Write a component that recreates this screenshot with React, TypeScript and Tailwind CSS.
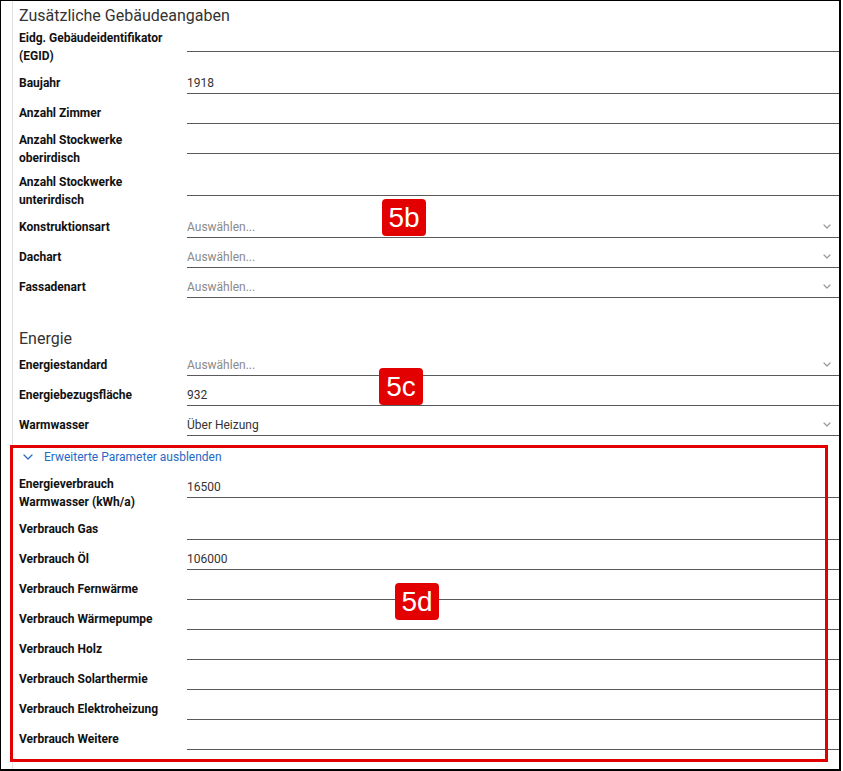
import React from "react";

type Field = {
  label: string;
  value?: string;
  select?: boolean;
  placeholder?: boolean;
};

const building: Field[] = [
  { label: "Eidg. Gebäudeidentifikator (EGID)" },
  { label: "Baujahr", value: "1918" },
  { label: "Anzahl Zimmer" },
  { label: "Anzahl Stockwerke oberirdisch" },
  { label: "Anzahl Stockwerke unterirdisch" },
  { label: "Konstruktionsart", value: "Auswählen...", select: true, placeholder: true },
  { label: "Dachart", value: "Auswählen...", select: true, placeholder: true },
  { label: "Fassadenart", value: "Auswählen...", select: true, placeholder: true },
];

const energy: Field[] = [
  { label: "Energiestandard", value: "Auswählen...", select: true, placeholder: true },
  { label: "Energiebezugsfläche", value: "932" },
  { label: "Warmwasser", value: "Über Heizung", select: true },
];

const extended: Field[] = [
  { label: "Energieverbrauch Warmwasser (kWh/a)", value: "16500" },
  { label: "Verbrauch Gas" },
  { label: "Verbrauch Öl", value: "106000" },
  { label: "Verbrauch Fernwärme" },
  { label: "Verbrauch Wärmepumpe" },
  { label: "Verbrauch Holz" },
  { label: "Verbrauch Solarthermie" },
  { label: "Verbrauch Elektroheizung" },
  { label: "Verbrauch Weitere" },
];

const Chevron = ({ color, w, h }: { color: string; w: number; h: number }) => (
  <svg width={w} height={h} viewBox={`0 0 ${w} ${h}`} fill="none">
    <path
      d={`M1 1 L${w / 2} ${h - 1} L${w - 1} 1`}
      stroke={color}
      strokeWidth="1.2"
      strokeLinecap="round"
      strokeLinejoin="round"
    />
  </svg>
);

// label is centred in the row, the input sits at the top of it
const Row = ({ field }: { field: Field }) => (
  <div className="flex min-h-[30px] items-center">
    <div className="w-[168px] shrink-0 py-[3px] pr-2 text-[12px] leading-[18px] font-bold text-[#111]">
      {field.label}
    </div>
    <div className="mt-1 flex h-[22px] flex-1 items-center self-start border-b border-[#5a5a5a] text-[12px]">
      <span className={field.placeholder ? "flex-1 text-[#8a8a8a]" : "flex-1 text-[#333]"}>
        {field.value}
      </span>
      {field.select && (
        <span className="pr-[8px]">
          <Chevron color="#999" w={8} h={5} />
        </span>
      )}
    </div>
  </div>
);

const Badge = ({ text, className }: { text: string; className: string }) => (
  <div
    className={
      "absolute flex h-[37px] w-[44px] items-center justify-center rounded-[4px] bg-[#e30000] text-[28px] leading-none text-white " +
      className
    }
    style={{ fontFamily: '"Liberation Sans", Arial, sans-serif' }}
  >
    {text}
  </div>
);

export default function App() {
  return (
    <div
      className="relative h-[771px] w-[841px] overflow-hidden border-t border-l border-r-2 border-b-2 border-black bg-white"
      style={{ fontFamily: 'Roboto, "Noto Sans", sans-serif' }}
    >
      <div className="ml-[11px] h-full border-l border-[#dedede] pl-[6px]">
        <h2 className="pt-[5px] text-[16px] leading-[20px] font-normal text-[#333]">
          Zusätzliche Gebäudeangaben
        </h2>
        {building.map((f) => (
          <Row key={f.label} field={f} />
        ))}

        <h2 className="pt-[27px] pb-px text-[16px] leading-[20px] font-normal text-[#333]">
          Energie
        </h2>
        {energy.map((f) => (
          <Row key={f.label} field={f} />
        ))}

        <div className="mt-[9px] flex items-center pb-[6px] pl-[4px] text-[12px] leading-[17px] text-[#2469c4]">
          <span className="mr-[11px] -mt-[2px]">
            <Chevron color="#2469c4" w={10} h={6} />
          </span>
          Erweiterte Parameter ausblenden
        </div>
        {extended.map((f) => (
          <Row key={f.label} field={f} />
        ))}
      </div>

      {/* annotations */}
      <div className="absolute top-[444px] left-[9px] h-[317px] w-[818px] border-[3px] border-[#e30000]" />
      <Badge text="5b" className="top-[198px] left-[381px]" />
      <Badge text="5c" className="top-[367px] left-[378px]" />
      <Badge text="5d" className="top-[582px] left-[394px]" />
    </div>
  );
}
